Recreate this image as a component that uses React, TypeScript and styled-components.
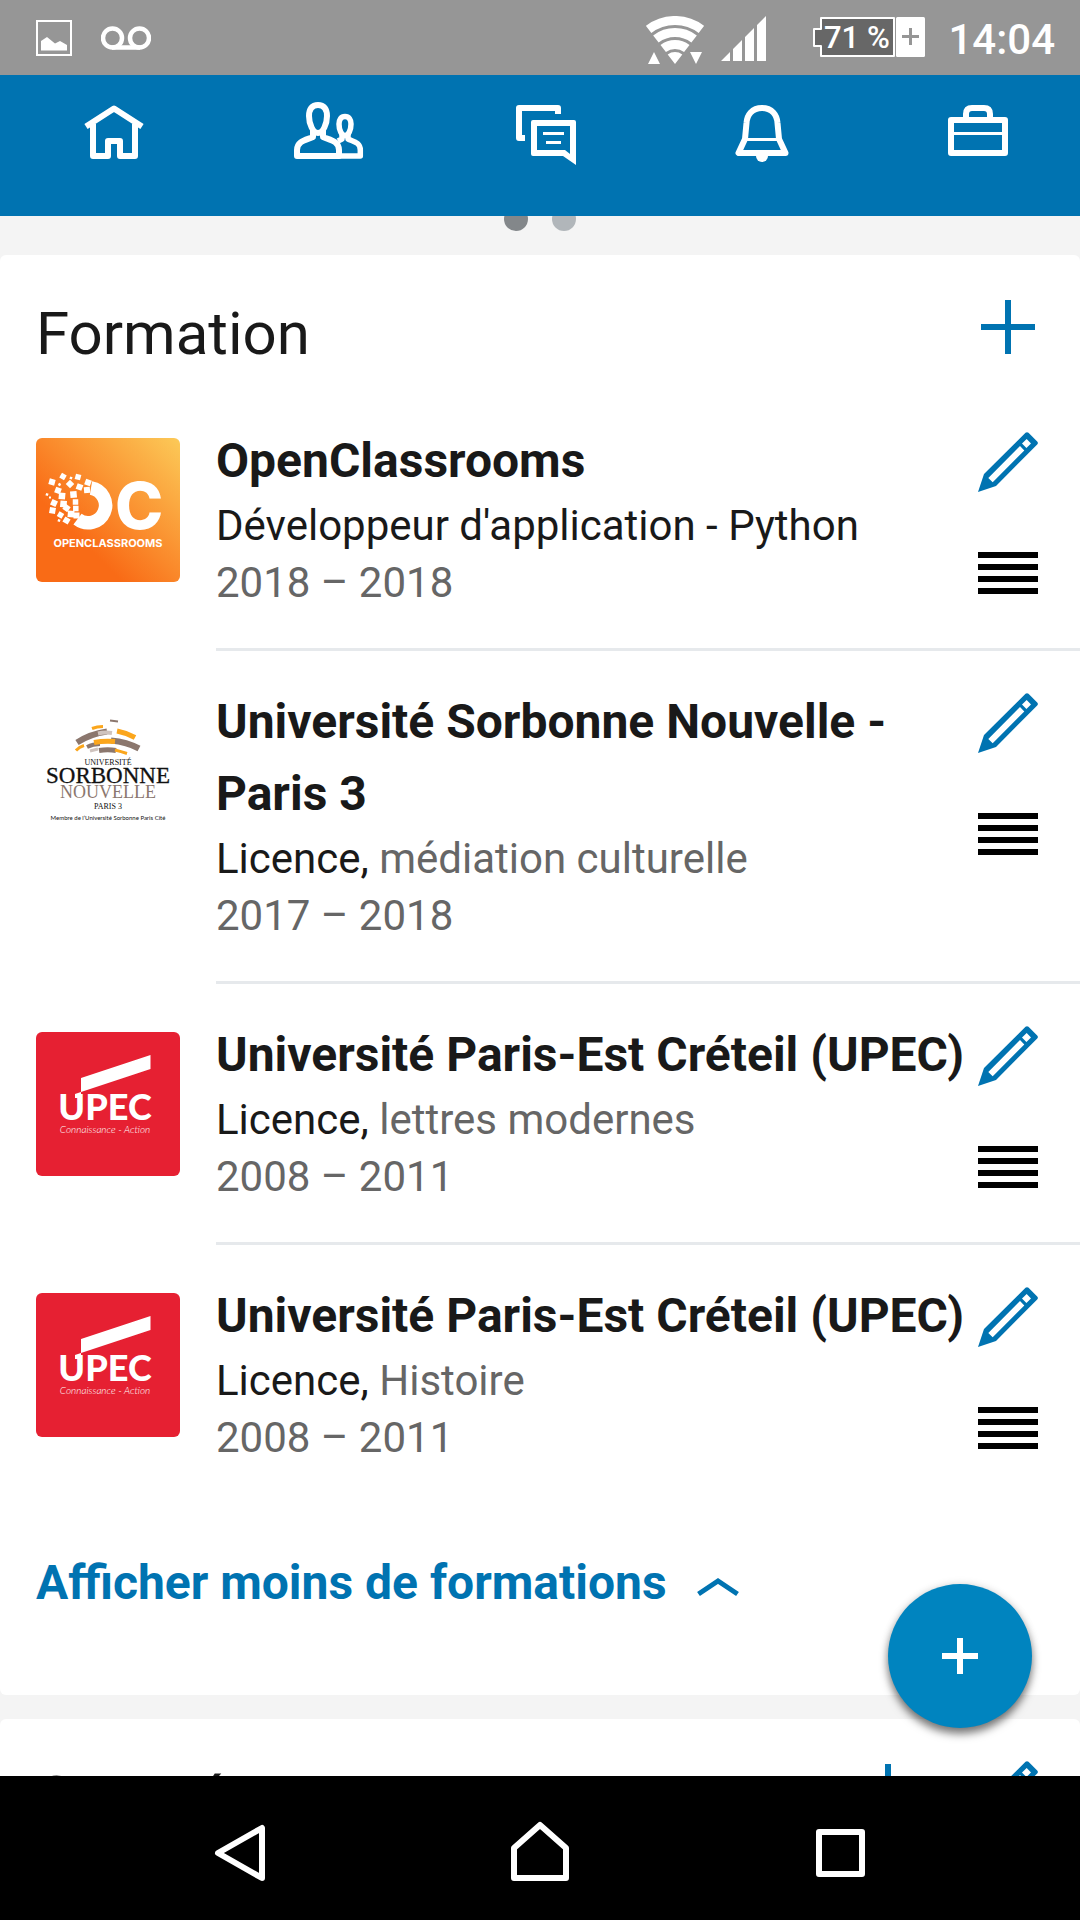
import React from "react";
import styled, { createGlobalStyle } from "styled-components";

const BLUE = "#0073b1";

const GlobalStyle = createGlobalStyle`
  * { box-sizing: border-box; }
  body { margin: 0; background: #f4f4f4; font-family: Roboto, "Noto Sans", sans-serif; color: #191919; }
  button { font: inherit; color: inherit; margin: 0; padding: 0; border: 0; background: none; cursor: pointer; }
  h2, h3, p, ul { margin: 0; padding: 0; font: inherit; }
  svg { display: block; flex: none; }
`;

const Screen = styled.div`
  display: flex;
  flex-direction: column;
  height: 100vh;
  overflow: hidden;
`;

const StatusBar = styled.header`
  display: flex;
  align-items: flex-start;
  justify-content: space-between;
  flex: none;
  height: 75px;
  padding: 0 25px 0 36px;
  background: #969696;
  color: #fff;
`;

const StatusGroup = styled.div<{ $gap: number; $top: number }>`
  display: flex;
  align-items: center;
  gap: ${(p) => p.$gap}px;
  padding-top: ${(p) => p.$top}px;
`;

const Clock = styled.time`
  font-size: 42px;
  font-weight: 500;
  line-height: 48px;
`;

const TopNav = styled.nav`
  display: grid;
  grid-template-columns: repeat(5, 1fr);
  justify-items: center;
  align-items: start;
  flex: none;
  height: 141px;
  padding-top: 15px;
  background: ${BLUE};
`;

const Viewport = styled.div`
  position: relative;
  flex: 1;
  min-height: 0;
`;

const Feed = styled.main`
  height: 100%;
  overflow: hidden;
`;

const Pager = styled.div`
  display: flex;
  justify-content: center;
  gap: 24px;
  margin: -9px 0 24px;
`;

const Dot = styled.button<{ $active?: boolean }>`
  width: 24px;
  height: 24px;
  border-radius: 50%;
  background: ${(p) => (p.$active ? "#83878a" : "#b1b6ba")};
`;

const Card = styled.section`
  display: flow-root;
  margin-bottom: 24px;
  border-radius: 6px;
  background: #fff;
`;

const CardHeader = styled.div`
  display: flex;
  align-items: flex-start;
  gap: 60px;
  padding: 42px 42px 19px 36px;
`;

const CardTitle = styled.h2`
  flex: 1;
  font-size: 60px;
  line-height: 74px;
`;

const Entries = styled.ul`
  list-style: none;
`;

const Entry = styled.li`
  display: flex;
  gap: 36px;
  padding-left: 36px;
`;

const LogoBox = styled.div`
  flex: none;
  width: 144px;
  height: 144px;
  margin-top: 48px;
  border-radius: 6px;
  overflow: hidden;
`;

const EntryMain = styled.div`
  display: flex;
  flex: 1;
  gap: 6px;
  padding-right: 42px;
  ${Entry}:not(:last-child) & {
    border-bottom: 3px solid #e6e9ec;
  }
`;

const EntryText = styled.div`
  flex: 1;
  padding: 35px 0 37px;
`;

const School = styled.h3`
  font-size: 48px;
  font-weight: 700;
  line-height: 72px;
`;

const Line = styled.p<{ $muted?: boolean }>`
  font-size: 42px;
  line-height: 57px;
  color: ${(p) => (p.$muted ? "#666" : "inherit")};
`;

const Field = styled.span`
  color: #666;
`;

const Actions = styled.div`
  display: flex;
  flex-direction: column;
  gap: 60px;
  padding-top: 42px;
`;

const Toggle = styled.button`
  display: flex;
  align-items: center;
  gap: 30px;
  margin: 44px 36px 76px;
  color: ${BLUE};
  font-size: 48px;
  font-weight: 700;
  line-height: 72px;
`;

const Fab = styled.button`
  position: absolute;
  right: 48px;
  bottom: 48px;
  display: grid;
  place-items: center;
  width: 144px;
  height: 144px;
  border-radius: 50%;
  background: #0084bf;
  box-shadow: 0 6px 9px rgba(0, 0, 0, 0.5), 0 0 9px rgba(0, 0, 0, 0.12);
`;

const SystemNav = styled.nav`
  display: grid;
  grid-template-columns: repeat(3, 1fr);
  place-items: center;
  flex: none;
  height: 144px;
  padding: 0 90px;
  background: #000;
`;

const NavIcon = ({ children }: { children: React.ReactNode }) => (
  <svg width="84" height="84" viewBox="0 0 84 84" fill="none" stroke="#fff" strokeWidth="6" strokeLinejoin="round" aria-hidden="true">
    {children}
  </svg>
);

const SystemIcon = ({ children }: { children: React.ReactNode }) => (
  <svg width="72" height="72" viewBox="0 0 72 72" fill="none" stroke="#fff" strokeWidth="6" strokeLinejoin="round" aria-hidden="true">
    {children}
  </svg>
);

const PlusIcon = () => (
  <svg width="60" height="60" viewBox="0 0 60 60" aria-hidden="true">
    <path d="M30 3V57M3 30H57" stroke={BLUE} strokeWidth="6" />
  </svg>
);

const PencilIcon = () => (
  <svg width="60" height="60" viewBox="0 0 60 60" aria-hidden="true">
    <path
      fill={BLUE}
      fillRule="evenodd"
      d="M0 60L6 42L47.5 .8Q49 -.5 50.5 .8L59.2 9.5Q60.6 11 59.2 12.5L18 54ZM10.3 46L14.7 50.2L46.3 18.4L42 14ZM44 11.5L48.4 16L53 11.5L48.7 7Z"
    />
  </svg>
);

const HandleIcon = () => (
  <svg width="60" height="42" viewBox="0 0 60 42" aria-hidden="true">
    <path d="M0 3H60M0 15H60M0 27H60M0 39H60" stroke="#000" strokeWidth="6" />
  </svg>
);

// Fragments of the dissolving "O": centre x, centre y, side, rotation.
const FRAGMENTS = [
  [16, 44, 6, 15], [27, 38.5, 5.5, 30], [42, 39, 5.5, 15], [52, 44.5, 6, 20], [34, 46, 6, 45],
  [43.5, 49, 6, 20], [51, 52, 6, -5], [22, 52.5, 6, 20], [26, 58, 6.5, 5], [37.5, 56.5, 6.5, -5],
  [18, 65, 6, 25], [27.5, 66, 6.5, 5], [39.5, 64, 5.5, 0], [16.5, 72.5, 6, 10], [30.5, 70, 6, 35],
  [35, 76, 6.5, 5], [39.8, 70.5, 5.5, 0], [24.5, 77, 5.5, 30], [30.5, 82.5, 6, 30], [40.5, 77.5, 6, 0],
  [11, 56.5, 2.5, 20], [23.5, 46.5, 2.5, 30], [35, 40, 2.5, 20], [14, 59.5, 2, 0], [23, 82.5, 2.5, 20],
];

const OpenClassroomsLogo = () => (
  <svg width="144" height="144" viewBox="0 0 144 144" role="img" aria-label="OpenClassrooms">
    <defs>
      <linearGradient id="oc" x1="0" y1="1" x2="1" y2="0">
        <stop offset="0.3" stopColor="#f96b16" />
        <stop offset="1" stopColor="#fcca58" />
      </linearGradient>
    </defs>
    <rect width="144" height="144" fill="url(#oc)" />
    <path d="M55 50A17.5 17.5 0 1 1 41.5 81.2" fill="none" stroke="#fff" strokeWidth="13.5" />
    {FRAGMENTS.map(([x, y, s, r], i) => (
      <rect key={i} x={x - s / 2} y={y - s / 2} width={s} height={s} fill="#fff" transform={`rotate(${r} ${x} ${y})`} />
    ))}
    <text x="79" y="91" fill="#fff" fontFamily="Inter, sans-serif" fontWeight="800" fontSize="65">C</text>
    <text x="72" y="109" textAnchor="middle" fill="#fff" fontFamily="Inter, sans-serif" fontWeight="700" fontSize="11">OPENCLASSROOMS</text>
  </svg>
);

const SorbonneLogo = () => (
  <svg width="144" height="144" viewBox="0 0 144 144" role="img" aria-label="Université Sorbonne Nouvelle">
    <rect width="144" height="144" fill="#fff" />
    <g fill="none" strokeLinecap="butt">
      <g stroke="#8b776e">
        <path d="M74 21.5L82 22.5" strokeWidth="2" />
        <path d="M41 43.5Q54 35 71 32.5" strokeWidth="6" />
        <path d="M75 41.5Q91 43 103 49.5" strokeWidth="6" />
        <path d="M51 48Q57 45 64 45" strokeWidth="4" />
        <path d="M63 51.5Q72 50 80 51.5" strokeWidth="5" />
      </g>
      <g stroke="#cfc3be">
        <path d="M62 34.5Q69 33 76 34" strokeWidth="4" />
        <path d="M54 52L62 50" strokeWidth="3" />
      </g>
      <g stroke="#fba61c">
        <path d="M56 29.5Q61 27.5 67 27.5" strokeWidth="3" />
        <path d="M81 32Q91 34 99 38.5" strokeWidth="5" />
        <path d="M58 43.5Q68 41.5 79 42.5" strokeWidth="5" />
        <path d="M40 51.5Q43 48 48 46.5" strokeWidth="3" />
        <path d="M79 51Q85 52.5 91 54.5" strokeWidth="3" />
      </g>
    </g>
    <g textAnchor="middle" fontFamily="'Liberation Serif', serif" fill="#111">
      <text x="72" y="66" fontSize="8">UNIVERSITÉ</text>
      <text x="72" y="84" fontSize="23" stroke="#111" strokeWidth="0.3">SORBONNE</text>
      <text x="72" y="99" fontSize="18" fill="#8b776e">NOUVELLE</text>
      <text x="72" y="110" fontSize="8">PARIS 3</text>
      <text x="72" y="121" fontSize="6" fontFamily="Lato, sans-serif">Membre de l’Université Sorbonne Paris Cité</text>
    </g>
  </svg>
);

const UpecLogo = () => (
  <svg width="144" height="144" viewBox="0 0 144 144" role="img" aria-label="UPEC">
    <rect width="144" height="144" fill="#e62032" />
    <path d="M45 46L114.5 23V37L45 60V66H39V62L45 60Z" fill="#fff" />
    <g fill="#fff" fontFamily="Lato, sans-serif">
      <text x="69" y="88" textAnchor="middle" fontWeight="900" fontSize="36">UPEC</text>
      <text x="69" y="101" textAnchor="middle" fontWeight="300" fontStyle="italic" fontSize="10">Connaissance - Action</text>
    </g>
  </svg>
);

interface Education {
  logo: React.ReactNode;
  school: string;
  degree: string;
  field?: string;
  years: string;
}

const EDUCATION: Education[] = [
  { logo: <OpenClassroomsLogo />, school: "OpenClassrooms", degree: "Développeur d'application - Python", years: "2018 – 2018" },
  { logo: <SorbonneLogo />, school: "Université Sorbonne Nouvelle - Paris 3", degree: "Licence,", field: "médiation culturelle", years: "2017 – 2018" },
  { logo: <UpecLogo />, school: "Université Paris-Est Créteil (UPEC)", degree: "Licence,", field: "lettres modernes", years: "2008 – 2011" },
  { logo: <UpecLogo />, school: "Université Paris-Est Créteil (UPEC)", degree: "Licence,", field: "Histoire", years: "2008 – 2011" },
];

export default function App() {
  return (
    <Screen>
      <GlobalStyle />
      <StatusBar>
        <StatusGroup $gap={29} $top={20}>
          <svg width="36" height="36" viewBox="0 0 36 36" aria-hidden="true">
            <rect x="1" y="1" width="34" height="34" fill="none" stroke="#fff" strokeWidth="2" />
            <path d="M5 21L11 17L19 23.5L24 21L31 25V30.5H5Z" fill="#fff" />
          </svg>
          <svg width="50" height="24" viewBox="0 0 50 24" fill="none" stroke="#fff" strokeWidth="4.5" aria-hidden="true">
            <circle cx="11.5" cy="12" r="9.5" />
            <circle cx="38.5" cy="12" r="9.5" />
            <path d="M11 21.5H39" />
          </svg>
        </StatusGroup>
        <StatusGroup $gap={23} $top={16}>
          <StatusGroup $gap={47} $top={0}>
            <StatusGroup $gap={17} $top={0}>
              <svg width="58" height="48" viewBox="0 0 58 48" aria-hidden="true">
                <g fill="none" stroke="#fff" strokeWidth="9">
                  <path d="M2.6 13.4A43.5 43.5 0 0 1 55.4 13.4" />
                  <path d="M9.9 23A31.5 31.5 0 0 1 48.1 23" />
                  <path d="M17.2 32.5A19.5 19.5 0 0 1 40.8 32.5" />
                </g>
                <path d="M29 48L21.7 38.5A12 12 0 0 1 36.3 38.5ZM2 48L8 36L14 48ZM44 36H56L50 48Z" fill="#fff" />
              </svg>
              <svg width="45" height="48" viewBox="0 0 45 48" aria-hidden="true">
                <path d="M0 45L9 36V45ZM12 45V33L21 24V45ZM24 45V21L33 12V45ZM36 45V9L45 0V45Z" fill="#fff" />
              </svg>
            </StatusGroup>
            <svg width="112" height="48" viewBox="0 -1 112 48" role="img" aria-label="Batterie 71 %">
              <path d="M8 1H81V39H8V29H1V12H8Z" fill="#676767" stroke="#fff" strokeWidth="2" strokeLinejoin="round" />
              <rect x="83" y="0" width="29" height="40" rx="1.5" fill="#fff" />
              <path d="M97.5 11V28M89 19.5H106" stroke="#969696" strokeWidth="3" />
              <text x="11" y="31" fill="#fff" fontSize="31" fontWeight="500">71 %</text>
            </svg>
          </StatusGroup>
          <Clock>14:04</Clock>
        </StatusGroup>
      </StatusBar>

      <TopNav aria-label="Navigation principale">
        <button aria-label="Accueil">
          <NavIcon>
            <path d="M27 34V66H42V51H54V66H69V34" />
            <path d="M20 36.5L48 18.5L76 36.5" />
          </NavIcon>
        </button>
        <button aria-label="Réseau">
          <NavIcon>
            <path d="M36 15C30 15 27 19 27 26C27 34 31 43 36 43C41 43 45 34 45 26C45 19 42 15 36 15Z" />
            <path d="M31 40V47C24 50 15 51 15 60V66H57V60C57 51 48 50 41 47V40" />
            <path d="M63 26.5C59 26.5 57 29.5 57 34C57 40 59.5 45.5 63 45.5C66.5 45.5 69 40 69 34C69 29.5 67 26.5 63 26.5Z" strokeWidth="5.5" />
            <path d="M66 43V49C71 51.5 78.3 52 78.3 60V66H57M60 44V49L56 51" strokeWidth="5.5" />
          </NavIcon>
        </button>
        <button aria-label="Messagerie">
          <NavIcon>
            <path d="M60 24V18H21V48H27" />
            <path d="M33 32Q33 30 35 30H76Q78 30 78 32V75L65 66H35Q33 66 33 64ZM39 36V60H67L72 64V36Z" fill="#fff" fillRule="evenodd" stroke="none" />
            <path d="M45 43.5H66M48 52.5H63" strokeWidth="3" />
          </NavIcon>
        </button>
        <button aria-label="Notifications">
          <NavIcon>
            <path d="M48 18C38 18 33 25 32.5 33L31 49L24.5 63H71.5L65 49L63.5 33C63 25 58 18 48 18Z" />
            <path d="M31 49.5H65" strokeWidth="3" />
            <path d="M42 66A6 6 0 0 0 54 66Z" fill="#fff" stroke="none" />
          </NavIcon>
        </button>
        <button aria-label="Emplois">
          <NavIcon>
            <path d="M21 30H75V63H21ZM36 30V24Q36 18 42 18H54Q60 18 60 24V30" />
            <path d="M21 43.5H75" strokeWidth="3" />
          </NavIcon>
        </button>
      </TopNav>

      <Viewport>
        <Feed>
          <Pager>
            <Dot $active aria-label="Page 1" />
            <Dot aria-label="Page 2" />
          </Pager>
          <Card>
            <CardHeader>
              <CardTitle>Formation</CardTitle>
              <button aria-label="Ajouter une formation"><PlusIcon /></button>
            </CardHeader>
            <Entries>
              {EDUCATION.map((e, i) => (
                <Entry key={i}>
                  <LogoBox>{e.logo}</LogoBox>
                  <EntryMain>
                    <EntryText>
                      <School>{e.school}</School>
                      <Line>
                        {e.degree}
                        {e.field && <Field> {e.field}</Field>}
                      </Line>
                      <Line $muted>{e.years}</Line>
                    </EntryText>
                    <Actions>
                      <button aria-label="Modifier"><PencilIcon /></button>
                      <button aria-label="Déplacer"><HandleIcon /></button>
                    </Actions>
                  </EntryMain>
                </Entry>
              ))}
            </Entries>
            <Toggle>
              Afficher moins de formations
              <svg width="42" height="42" viewBox="0 0 42 42" aria-hidden="true">
                <path d="M1.5 32L21 19L40.5 32" fill="none" stroke={BLUE} strokeWidth="5" />
              </svg>
            </Toggle>
          </Card>
          <Card>
            <CardHeader>
              <CardTitle>Compétences</CardTitle>
              <button aria-label="Ajouter une compétence"><PlusIcon /></button>
              <button aria-label="Modifier les compétences"><PencilIcon /></button>
            </CardHeader>
          </Card>
        </Feed>
        <Fab aria-label="Ajouter">
          <svg width="36" height="36" viewBox="0 0 36 36" aria-hidden="true">
            <path d="M18 0V36M0 18H36" stroke="#fff" strokeWidth="6" />
          </svg>
        </Fab>
      </Viewport>

      <SystemNav aria-label="Navigation système">
        <button aria-label="Retour">
          <SystemIcon><path d="M58 16V66L14 41Z" /></SystemIcon>
        </button>
        <button aria-label="Écran d'accueil">
          <SystemIcon><path d="M10 66V36L36 13L62 36V66Z" /></SystemIcon>
        </button>
        <button aria-label="Applications récentes">
          <SystemIcon><path d="M15 20H58V62H15Z" /></SystemIcon>
        </button>
      </SystemNav>
    </Screen>
  );
}
